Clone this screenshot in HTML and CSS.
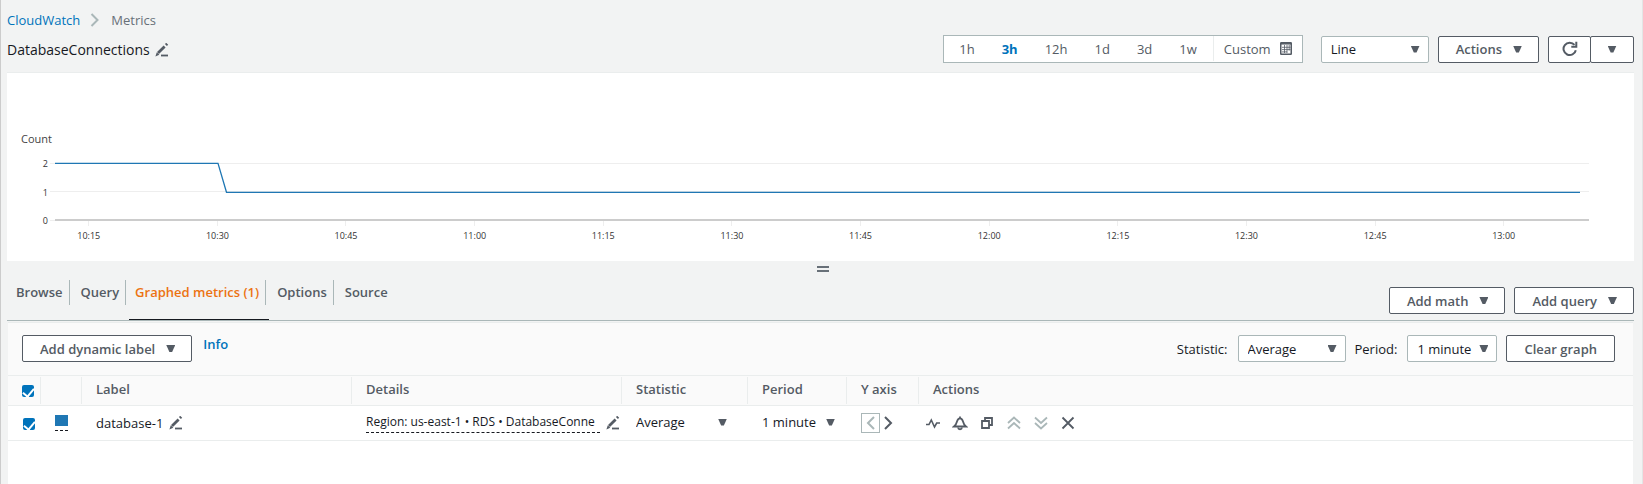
FILE: index.html
```html
<!DOCTYPE html>
<html lang="en">
<head>
<meta charset="utf-8">
<title>CloudWatch Metrics</title>
<link rel="stylesheet" href="styles.css">
</head>
<body>
<svg class="sprite" aria-hidden="true">
  <symbol id="pencil" viewBox="0 0 14 14"><path d="M6 12.500h7" stroke="currentColor" stroke-width="1.800" fill="none"/><path d="M3 10 9.600 3.400M10.900 2.100 12.200.8" stroke="currentColor" stroke-width="2.800" fill="none"/><path d="M1.800 9.300 4.300 11.800.4 13.400z" fill="currentColor"/></symbol>
</svg>
<main class="page">
  <nav class="crumbs" aria-label="Breadcrumb">
    <a class="link" href="#">CloudWatch</a>
    <svg class="crumb-arrow" viewBox="0 0 10 14"><path d="M1.500 1 7.500 7l-6 6" fill="none" stroke="#aab7b8" stroke-width="2"/></svg>
    <span class="crumb-current">Metrics</span>
  </nav>
  <header class="topbar">
    <h1 class="title">DatabaseConnections</h1>
    <button class="icon-btn title-edit" aria-label="Edit title"><svg class="icon"><use href="#pencil"/></svg></button>
    <div class="ranges" role="group" aria-label="Time range">
      <button class="range">1h</button>
      <button class="range range-on">3h</button>
      <button class="range">12h</button>
      <button class="range">1d</button>
      <button class="range">3d</button>
      <button class="range">1w</button>
      <button class="range range-custom">Custom
        <svg class="calendar" viewBox="0 0 12 13"><rect x=".75" y=".75" width="10.500" height="11.500" rx=".5" fill="#fff" stroke="#545b64" stroke-width="1.500"/><path d="M1 1.800h10" stroke="#545b64" stroke-width="1.500"/><path d="M4.500 3v8M7 3v8M9.200 3v5.500M2 5.300h8.500M2 7.600h8.500M2 9.900h5" stroke="#545b64" stroke-width=".8"/></svg>
      </button>
    </div>
    <span class="select select-wide"><select aria-label="Chart type"><option>Line</option></select></span>
    <button class="btn">Actions <i class="caret"></i></button>
    <div class="split">
      <button class="btn btn-icon" aria-label="Refresh"><svg class="refresh" viewBox="0 0 16 16"><path d="M13.800 9.200A6.200 6.200 0 1 1 12.500 3.900" fill="none" stroke="currentColor" stroke-width="2"/><path d="M14.300.8v5H9.300" fill="none" stroke="currentColor" stroke-width="2"/></svg></button>
      <button class="btn btn-icon" aria-label="Refresh options"><i class="caret"></i></button>
    </div>
  </header>

  <section class="chart">
    <div class="unit">Count</div>
    <svg class="plot" role="img" aria-label="Database connections">
      <g class="grid">
        <line x1="-5" x2="100%" y1="8.500" y2="8.500"/><line x1="-5" x2="100%" y1="36.500" y2="36.500"/><line x1="-5" x2="0" y1="65.500" y2="65.500"/>
        <line x1="2.200%" x2="2.200%" y1="66" y2="71"/><line x1="10.590%" x2="10.590%" y1="66" y2="71"/><line x1="18.970%" x2="18.970%" y1="66" y2="71"/><line x1="27.360%" x2="27.360%" y1="66" y2="71"/><line x1="35.740%" x2="35.740%" y1="66" y2="71"/><line x1="44.130%" x2="44.130%" y1="66" y2="71"/><line x1="52.510%" x2="52.510%" y1="66" y2="71"/><line x1="60.900%" x2="60.900%" y1="66" y2="71"/><line x1="69.290%" x2="69.290%" y1="66" y2="71"/><line x1="77.670%" x2="77.670%" y1="66" y2="71"/><line x1="86.060%" x2="86.060%" y1="66" y2="71"/><line x1="94.440%" x2="94.440%" y1="66" y2="71"/>
      </g>
      <line class="axis" x1="0" x2="100%" y1="65" y2="65"/>
      <g class="ylabels"><text x="-7" y="12">2</text><text x="-7" y="41">1</text><text x="-7" y="69">0</text></g>
      <g class="xlabels">
        <text x="2.200%" y="84">10:15</text><text x="10.590%" y="84">10:30</text><text x="18.970%" y="84">10:45</text><text x="27.360%" y="84">11:00</text><text x="35.740%" y="84">11:15</text><text x="44.130%" y="84">11:30</text><text x="52.510%" y="84">11:45</text><text x="60.900%" y="84">12:00</text><text x="69.290%" y="84">12:15</text><text x="77.670%" y="84">12:30</text><text x="86.060%" y="84">12:45</text><text x="94.440%" y="84">13:00</text>
      </g>
      <svg width="100%" height="66" viewBox="0 0 1534 66" preserveAspectRatio="none"><polyline class="series" points="0,8.300 163,8.300 171.500,37.300 1525,37.300"/></svg>
    </svg>
  </section>

  <div class="grip"><i></i><i></i></div>

  <div class="tabbar">
    <nav class="tabs">
      <a class="tab" href="#"><span>Browse</span></a>
      <a class="tab" href="#"><span>Query</span></a>
      <a class="tab tab-on" href="#"><span>Graphed metrics (1)</span></a>
      <a class="tab" href="#"><span>Options</span></a>
      <a class="tab" href="#"><span>Source</span></a>
    </nav>
    <div class="tab-actions">
      <button class="btn">Add math <i class="caret"></i></button>
      <button class="btn">Add query <i class="caret"></i></button>
    </div>
  </div>

  <section class="panel">
    <div class="tools">
      <button class="btn">Add dynamic label <i class="caret"></i></button>
      <a class="link info" href="#">Info</a>
      <label class="tool-label" for="stat">Statistic:</label>
      <span class="select select-wide"><select id="stat"><option>Average</option></select></span>
      <label class="tool-label" for="period">Period:</label>
      <span class="select select-narrow"><select id="period"><option>1 minute</option></select></span>
      <button class="btn">Clear graph</button>
    </div>
    <table class="metrics">
      <colgroup><col class="c-check"><col class="c-color"><col class="c-label"><col class="c-label"><col class="c-stat"><col class="c-period"><col class="c-axis"><col></colgroup>
      <thead>
        <tr>
          <th><div class="head head-check"><input class="check" type="checkbox" checked aria-label="Select all"></div></th>
          <th><div class="head"></div></th>
          <th><div class="head">Label</div></th>
          <th><div class="head">Details</div></th>
          <th><div class="head">Statistic</div></th>
          <th><div class="head">Period</div></th>
          <th><div class="head">Y axis</div></th>
          <th><div class="head head-last">Actions</div></th>
        </tr>
      </thead>
      <tbody>
        <tr>
          <td><div class="cell cell-check"><input class="check" type="checkbox" checked aria-label="Select database-1"></div></td>
          <td><div class="cell"><button class="color" aria-label="Change color"><i></i></button></div></td>
          <td><div class="cell cell-gap">database-1 <button class="icon-btn" aria-label="Edit label"><svg class="icon"><use href="#pencil"/></svg></button></div></td>
          <td><div class="cell cell-gap"><span class="details">Region: us-east-1 • RDS • DatabaseConne</span> <button class="icon-btn" aria-label="Edit details"><svg class="icon"><use href="#pencil"/></svg></button></div></td>
          <td><div class="cell cell-select"><span class="select select-bare bare-stat"><select aria-label="Statistic"><option>Average</option></select></span></div></td>
          <td><div class="cell cell-select"><span class="select select-bare bare-period"><select aria-label="Period"><option>1 minute</option></select></span></div></td>
          <td><div class="cell">
            <button class="icon-btn axis-left" aria-label="Left axis"><svg viewBox="0 0 10 14"><path d="M8 1 2 7l6 6"/></svg></button>
            <button class="icon-btn axis-right" aria-label="Right axis"><svg viewBox="0 0 10 14"><path d="M2 1l6 6-6 6"/></svg></button>
          </div></td>
          <td><div class="cell row-actions">
            <button class="icon-btn" aria-label="Anomaly detection"><svg class="act" viewBox="0 0 16 16"><path d="M1 9.500h3l2.300-4.500 3.200 7L11.700 8H15" stroke-width="1.600"/></svg></button>
            <button class="icon-btn" aria-label="Create alarm"><svg class="act" viewBox="0 0 16 16"><path d="M2 11.500h12c-2-1.500-2.500-3-3-5C10.500 4.500 9.500 3.300 8 3.300S5.500 4.500 5 6.500c-.5 2-1 3.500-3 5zM8 3.300V1.500"/><path d="M6 12.500c.3 2.300 3.700 2.300 4 0"/></svg></button>
            <button class="icon-btn" aria-label="Duplicate"><svg class="act" viewBox="0 0 16 16"><path d="M3 6h7v7H3zM6 5.500V3h7v7h-2.500"/></svg></button>
            <button class="icon-btn off" aria-label="Move up"><svg class="act" viewBox="0 0 16 16"><path d="M2 8l6-5.500L14 8M2 13.500 8 8l6 5.500"/></svg></button>
            <button class="icon-btn off" aria-label="Move down"><svg class="act" viewBox="0 0 16 16"><path d="M2 2.500 8 8l6-5.500M2 8l6 5.500L14 8"/></svg></button>
            <button class="icon-btn" aria-label="Remove"><svg class="act" viewBox="0 0 16 16"><path d="M2.500 2.500l11 11M13.500 2.500l-11 11"/></svg></button>
          </div></td>
        </tr>
      </tbody>
    </table>
  </section>
</main>
</body>
</html>
```
FILE: styles.css
```css
* { box-sizing: border-box; }
body {
  margin: 0;
  background: #f2f3f3;
  color: #16191f;
  font: 13px/20px "Open Sans", "Noto Sans", sans-serif;
}
button, select { font: inherit; color: inherit; }
button { cursor: pointer; }
.sprite { position: absolute; width: 0; height: 0; }
.page {
  display: flex;
  flex-direction: column;
  min-height: 100vh;
  padding: 10px 8px 0 6px;
  border-left: 1px solid #ccc;
  border-right: 1px solid #e3e5e5;
}
.link { color: #0073bb; text-decoration: none; }

/* Header */
.crumbs { display: flex; align-items: center; }
.crumb-arrow { width: 10px; height: 14px; margin: 0 11px 0 10px; }
.crumb-current { color: #687078; }
.topbar { display: flex; align-items: center; padding: 5px 0 9px; }
.title { margin: 0; padding-top: 2px; font-size: 14px; font-weight: 400; }
.icon-btn { display: flex; padding: 0; border: 0; background: none; color: #545b64; }
.icon { width: 14px; height: 14px; }
.title-edit { margin: 0 auto 0 5px; padding-top: 2px; }
.ranges {
  display: flex;
  gap: 1px;
  height: 28px;
  margin-right: 18px;
  padding: 0 0 0 2px;
  border: 1px solid #aab7b8;
  background: #fff;
}
.range { padding: 0 13px; border: 0; background: none; color: #545b64; }
.range-on { color: #0073bb; font-weight: 700; }
.range-custom {
  display: flex;
  align-items: center;
  gap: 9px;
  margin: 0 0 1px 2px;
  padding: 0 10px;
  border-left: 1px solid #eaeded;
}
.calendar { width: 12px; height: 13px; }
.btn {
  display: flex;
  align-items: center;
  height: 27px;
  padding: 0 17px;
  border: 1px solid #545b64;
  border-radius: 2px;
  background: #fff;
  color: #545b64;
  font-weight: 600;
  white-space: nowrap;
}
.caret {
  width: 9px;
  height: 7px;
  margin-left: 11px;
  background: #545b64;
  clip-path: polygon(0 0, 100% 0, 65% 100%, 35% 100%);
}
.btn:has(.caret) { padding-right: 16px; }
.split { display: flex; margin-left: 9px; }
.btn-icon, .btn-icon:has(.caret) { justify-content: center; width: 43px; padding: 0; }
.btn-icon .caret { margin: 0; }
.btn-icon + .btn-icon { width: 44px; margin-left: -1px; }
.refresh { width: 16px; height: 16px; }
.select { position: relative; display: inline-flex; }
.select select {
  width: 100%;
  height: 27px;
  padding: 0 9px;
  border: 1px solid #aab7b8;
  border-radius: 2px;
  background: #fff;
  appearance: none;
}
.select::after {
  content: "";
  position: absolute;
  top: 10px;
  right: 9px;
  width: 9px;
  height: 7px;
  background: #545b64;
  clip-path: polygon(0 0, 100% 0, 65% 100%, 35% 100%);
  pointer-events: none;
}
.select-wide { width: 108px; margin-right: 9px; }
.select-narrow { width: 90px; margin-right: 9px; }

/* Chart */
.chart { height: 189px; padding: 56px 45px 0 48px; background: #fff; border-top: 1px solid #eaeded; }
.unit { margin-left: -34px; color: #444; font-size: 11px; }
.plot { display: block; width: 100%; height: 90px; margin-top: 6px; overflow: visible; font-size: 9px; fill: #333; }
.grid { stroke: #eee; shape-rendering: crispEdges; }
.axis { stroke: #ccc; stroke-width: 2; }
.ylabels { text-anchor: end; }
.xlabels { text-anchor: middle; }
.series { fill: none; stroke: #1f77b4; stroke-width: 1.3; vector-effect: non-scaling-stroke; }
.grip { display: flex; flex-direction: column; align-items: center; gap: 2px; height: 18px; padding: 5px 0 0 4px; }
.grip i { width: 12px; height: 2px; background: #687078; }

/* Tabs */
.tabbar { display: flex; justify-content: space-between; border-bottom: 1px solid #aab7b8; }
.tabs { display: flex; height: 41px; }
.tab { padding: 1px 3px 0 0; color: #545b64; font-weight: 600; text-decoration: none; }
.tab span { display: block; height: 25px; padding: 2px 6px 0 8px; border-right: 1px solid #aab7b8; }
.tab:first-child span { padding-left: 9px; }
.tab:last-child span { border: 0; }
.tab-on { border-bottom: 1px solid #16191f; color: #ec7211; }
.tab-on span { padding-left: 6px; }
.tab-actions { display: flex; gap: 9px; margin: 8px 0 6px; }

/* Metrics panel */
.panel { flex: 1; margin: 1px 1px 0; border-top: 1px solid #eaeded; background: #fff; }
.tools { display: flex; align-items: center; height: 52px; padding: 0 18px 1px 14px; background: #fafafa; }
.info { align-self: flex-start; margin: 11px auto 0 11px; font-weight: 600; }
.tool-label { margin-right: 10px; }
.metrics { width: 100%; border-collapse: collapse; table-layout: fixed; text-align: left; }
.metrics th, .metrics td { padding: 0; font-weight: 400; }
.metrics th { padding: 1px 0; border-top: 1px solid #eaeded; border-bottom: 1px solid #eaeded; background: #fafafa; }
.metrics td { border-bottom: 1px solid #eaeded; }
.c-check { width: 33px; }
.c-color { width: 41px; }
.c-label { width: 270px; }
.c-stat { width: 126px; }
.c-period { width: 99px; }
.c-axis { width: 72px; }
.head { height: 27px; padding: 2px 14px; border-right: 1px solid #eaeded; color: #545b64; font-weight: 600; }
.metrics .head-check { padding: 8px 0 0 14px; }
.head-last { border: 0; }
.cell { display: flex; align-items: center; height: 34px; padding-left: 14px; }
.cell-check { padding: 2px 0 0 15px; }
.cell-gap { gap: 6px; }
.cell-select { padding-bottom: 2px; }
.check {
  width: 12px;
  height: 12px;
  margin: 0;
  appearance: none;
  border-radius: 2px;
  background: #0073bb;
  display: grid;
}
.check:checked::before {
  content: "";
  width: 5px;
  height: 9px;
  margin: 1px auto 0;
  border: solid #fff;
  border-width: 0 2px 2px 0;
  transform: rotate(40deg);
}
.color { display: block; padding: 0 0 4px; border: 0; border-bottom: 1px dashed #16191f; background: none; }
.color i { display: block; width: 13px; height: 11px; background: #1f77b4; }
.details { width: 234px; height: 20px; overflow: hidden; border-bottom: 1px dashed #16191f; font-size: 12px; line-height: 18px; white-space: nowrap; }
.select-bare select { border: 0; padding: 0; }
.select-bare::after { right: 0; }
.bare-stat { width: 91px; }
.bare-period { width: 73px; }
.axis-left, .axis-right { fill: none; stroke: #545b64; stroke-width: 2; }
.axis-left { justify-content: center; width: 19px; padding: 2px 0; border: 1px solid #aab7b8; stroke: #aab7b8; }
.axis-right { margin-left: 3px; }
.axis-left svg, .axis-right svg { width: 10px; height: 14px; }
.row-actions { gap: 11px; padding-left: 6px; }
.act { width: 16px; height: 16px; fill: none; stroke: currentColor; stroke-width: 1.8; }
.off { color: #aab7b8; }
```
